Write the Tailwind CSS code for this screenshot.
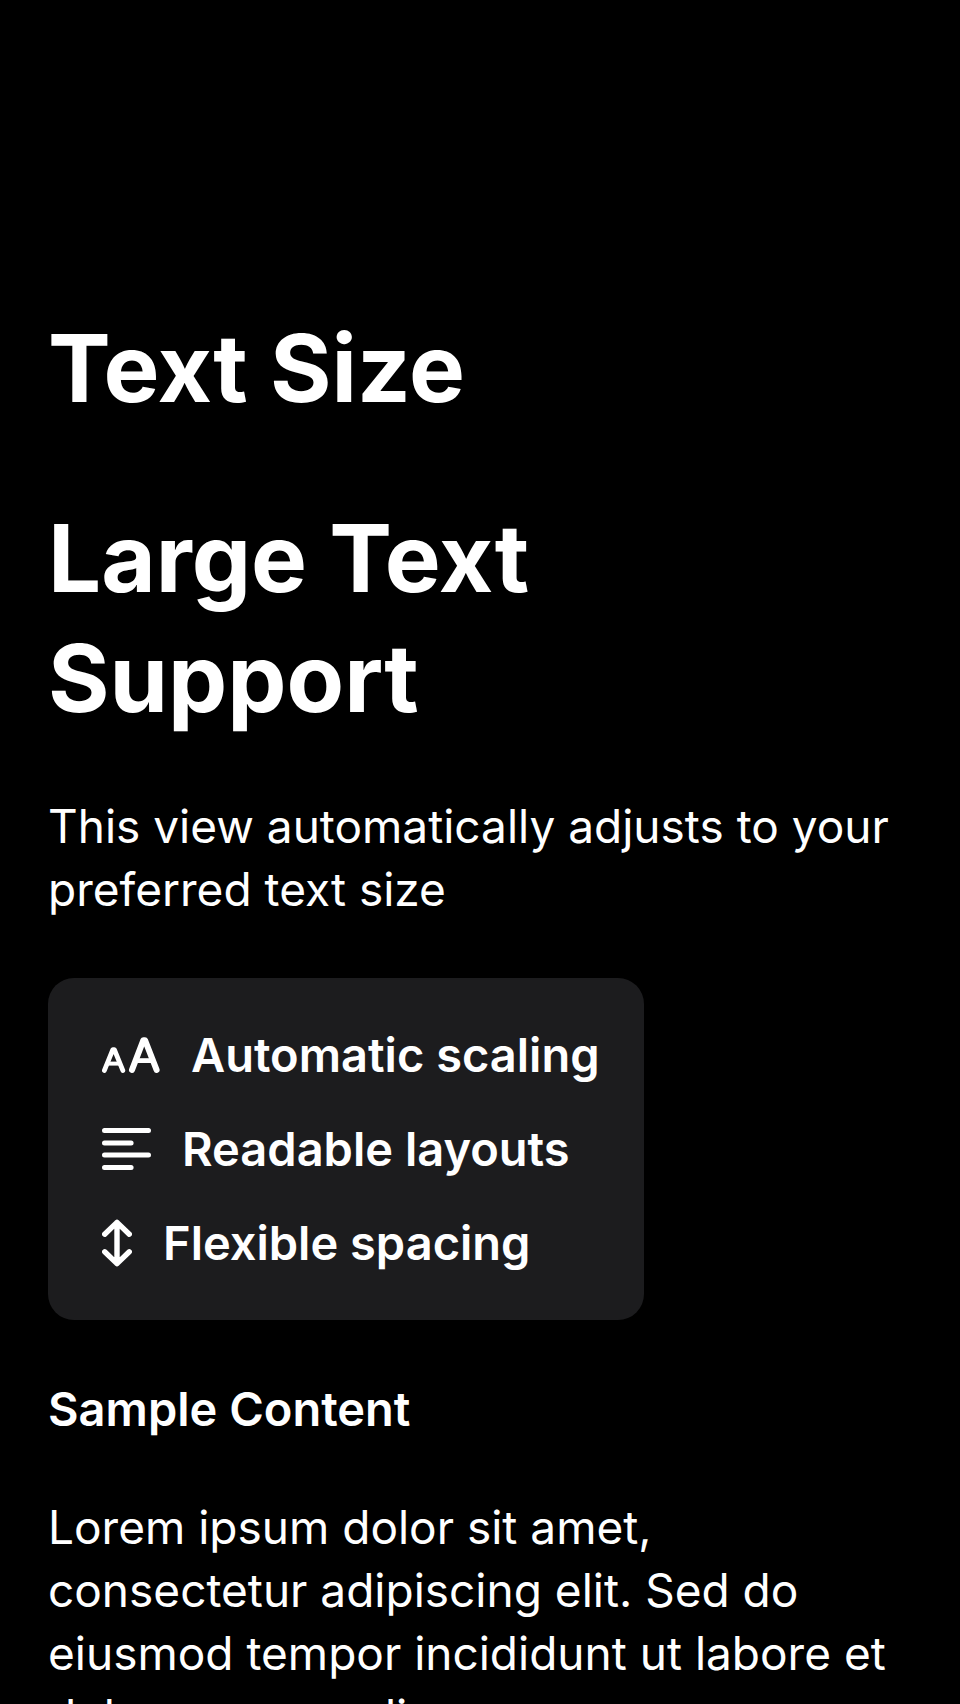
<!DOCTYPE html>
<html lang="en">
<head>
<meta charset="utf-8">
<meta name="viewport" content="width=device-width, initial-scale=1">
<title>Text Size</title>
<script src="https://cdn.jsdelivr.net/npm/@tailwindcss/browser@4"></script>
</head>
<body class="h-screen overflow-hidden bg-black font-['Inter','Liberation_Sans',sans-serif] text-white">
<main class="px-12 pt-[308px]">
  <h1 class="text-[94px] leading-[120px] font-bold">Text Size</h1>
  <h2 class="mt-[70px] max-w-[600px] text-[94px] leading-[120px] font-bold">Large Text Support</h2>
  <p class="mt-[57px] text-[46px] leading-[63px]">This view automatically adjusts to your preferred text size</p>
  <ul class="mt-[57px] flex w-fit flex-col gap-[31px] rounded-[26px] bg-[#1c1c1e] pt-[45px] pr-[44px] pb-[46px] pl-[54px] text-[47px] leading-[63px] font-semibold">
    <li class="flex items-center gap-[31px]">
      <svg class="h-[36px] w-[58px]" viewBox="0 0 58 36" fill="none" stroke="currentColor" stroke-linecap="round" stroke-linejoin="round" aria-hidden="true"><path stroke-width="4.8" d="M2.4 33.4 10.8 12.6H12.4L20.8 33.4"/><path stroke-width="4" stroke-linecap="butt" d="M6 26.6H17"/><path stroke-width="6" d="M30 32.9 41.4 3.2H43L54.6 32.9"/><path stroke-width="4.8" stroke-linecap="butt" d="M34 23.6H50"/></svg>
      <span>Automatic scaling</span>
    </li>
    <li class="flex items-center gap-[31px]">
      <svg class="h-[42px] w-[49px]" viewBox="0 0 49 42" fill="none" stroke="currentColor" stroke-width="5" stroke-linecap="round" aria-hidden="true"><path d="M2.5 2.6H46.5M2.5 14.9H29.1M2.5 27.1H46.5M2.5 39.4H29.1"/></svg>
      <span>Readable layouts</span>
    </li>
    <li class="flex items-center gap-[31px]">
      <svg class="h-[48px] w-[30px]" viewBox="0 0 30 48" fill="none" stroke="currentColor" stroke-width="5.4" stroke-linecap="round" stroke-linejoin="round" aria-hidden="true"><path d="M15 3.4V44.6M2.7 15.2 15 3.4 27.3 15.2M2.7 32.8 15 44.6 27.3 32.8"/></svg>
      <span>Flexible spacing</span>
    </li>
  </ul>
  <h3 class="mt-[57px] text-[47px] leading-[63px] font-semibold">Sample Content</h3>
  <p class="mt-14 text-[46px] leading-[63px]">Lorem ipsum dolor sit amet, consectetur adipiscing elit. Sed do eiusmod tempor incididunt ut labore et dolore magna aliqua.</p>
</main>
</body>
</html>
